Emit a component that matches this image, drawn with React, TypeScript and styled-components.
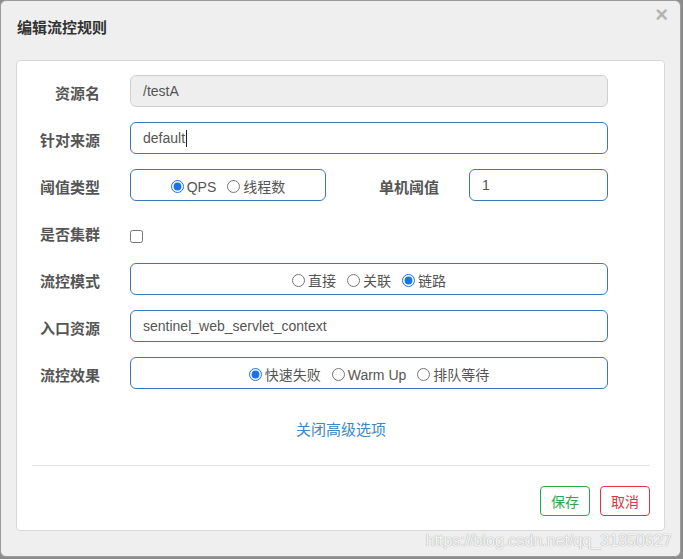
import React from "react"
import styled, { createGlobalStyle } from "styled-components"

const GlobalStyle = createGlobalStyle`
  html, body {
    margin: 0;
    padding: 0;
    background: #8c8c8c;
  }
  body {
    font-family: "Liberation Sans", "Noto Sans CJK SC", sans-serif;
    font-size: 14px;
    color: #555;
  }
`

const Dialog = styled.div`
  position: relative;
  box-sizing: border-box;
  width: 681px;
  height: 557px;
  background: #efefef;
  border: 1px solid #9a9a9a;
  border-radius: 6px;
  overflow: hidden;
`

const Header = styled.div`
  display: flex;
  justify-content: space-between;
  align-items: flex-start;
  height: 59px;
  padding: 0 12px 0 16px;
`

const Title = styled.h4`
  margin: 18px 0 0;
  font-size: 15px;
  line-height: 18px;
  font-weight: 700;
  color: #333;
`

const Close = styled.span`
  margin-top: 3px;
  font-family: "Liberation Sans", sans-serif;
  font-size: 22px;
  font-weight: 700;
  line-height: 22px;
  color: #b4b4b4;
`

const Panel = styled.div`
  box-sizing: border-box;
  margin: 0 15px;
  height: 471px;
  background: #fff;
  border: 1px solid #d8d8d8;
  border-radius: 4px;
  padding: 14px 14px 0 15px;
`

const Row = styled.div`
  display: flex;
  align-items: center;
  height: 32px;
  margin-bottom: 15px;
`

const Label = styled.label<{ width?: number }>`
  flex: none;
  width: ${(p) => p.width ?? 68}px;
  margin-right: 30px;
  padding-top: 4px;
  text-align: right;
  font-family: "Noto Sans CJK SC", sans-serif;
  font-size: 15px;
  font-weight: 700;
  color: #555;
  line-height: 20px;
`

const TextInput = styled.div<{ disabled?: boolean; width?: number }>`
  box-sizing: border-box;
  display: flex;
  align-items: center;
  width: ${(p) => p.width ?? 478}px;
  height: 32px;
  padding: 0 12px;
  border: 1px solid ${(p) => (p.disabled ? "#cfcfcf" : "#3a78b5")};
  border-radius: 6px;
  background: ${(p) => (p.disabled ? "#eee" : "#fff")};
  font-size: 14px;
  color: #555;
`

const Caret = styled.span`
  display: inline-block;
  width: 1px;
  height: 17px;
  background: #222;
  margin-left: 1px;
`

const RadioBox = styled.div<{ width?: number }>`
  box-sizing: border-box;
  display: flex;
  justify-content: center;
  align-items: center;
  gap: 11px;
  width: ${(p) => p.width ?? 478}px;
  height: 32px;
  padding-top: 3px;
  border: 1px solid #3a78b5;
  border-radius: 6px;
  background: #fff;
`

const Option = styled.label`
  display: flex;
  align-items: center;
  gap: 3px;
  font-size: 14px;
  line-height: 18px;
  color: #555;

  input {
    margin: 0;
    width: 13px;
    height: 13px;
    accent-color: #1a73e8;
  }
`

const Check = styled.input`
  margin: 8px 0 0;
  width: 13px;
  height: 13px;
`

const LinkRow = styled.div`
  display: flex;
  justify-content: center;
  margin: 30px 0 0;
  height: 20px;
`

const Link = styled.a`
  font-family: "Noto Sans CJK SC", sans-serif;
  font-size: 15px;
  line-height: 20px;
  color: #3c87c8;
  text-decoration: none;
`

const Divider = styled.hr`
  margin: 26px 0 0 0;
  border: 0;
  border-top: 1px solid #e3e3e3;
  width: 618px;
`

const Footer = styled.div`
  display: flex;
  justify-content: flex-end;
  gap: 10px;
  margin-top: 20px;
`

const Button = styled.button<{ tone: string }>`
  box-sizing: border-box;
  width: 50px;
  height: 30px;
  padding: 0;
  background: #fff;
  border: 1px solid ${(p) => p.tone};
  border-radius: 4px;
  color: ${(p) => p.tone};
  font-family: "Noto Sans CJK SC", sans-serif;
  font-size: 14px;
`

const Watermark = styled.span`
  position: absolute;
  right: 8px;
  bottom: 6px;
  font-family: "Liberation Sans", sans-serif;
  font-size: 16.5px;
  letter-spacing: -0.2px;
  color: rgba(255, 255, 255, 0.9);
  text-shadow: 0 0 1px #a9a9a9, 0 0 1px #b5b5b5;
`

export default function App() {
  return (
    <>
      <GlobalStyle />
      <Dialog>
        <Header>
          <Title>编辑流控规则</Title>
          <Close>×</Close>
        </Header>
        <Panel>
          <Row>
            <Label>资源名</Label>
            <TextInput disabled>/testA</TextInput>
          </Row>
          <Row>
            <Label>针对来源</Label>
            <TextInput>
              default<Caret />
            </TextInput>
          </Row>
          <Row>
            <Label>阈值类型</Label>
            <RadioBox width={196}>
              <Option>
                <input type="radio" name="grade" defaultChecked />
                QPS
              </Option>
              <Option>
                <input type="radio" name="grade" />
                线程数
              </Option>
            </RadioBox>
            <Label width={113}>单机阈值</Label>
            <TextInput width={139}>1</TextInput>
          </Row>
          <Row>
            <Label>是否集群</Label>
            <Check type="checkbox" />
          </Row>
          <Row>
            <Label>流控模式</Label>
            <RadioBox>
              <Option>
                <input type="radio" name="strategy" />
                直接
              </Option>
              <Option>
                <input type="radio" name="strategy" />
                关联
              </Option>
              <Option>
                <input type="radio" name="strategy" defaultChecked />
                链路
              </Option>
            </RadioBox>
          </Row>
          <Row>
            <Label>入口资源</Label>
            <TextInput>sentinel_web_servlet_context</TextInput>
          </Row>
          <Row>
            <Label>流控效果</Label>
            <RadioBox>
              <Option>
                <input type="radio" name="behavior" defaultChecked />
                快速失败
              </Option>
              <Option>
                <input type="radio" name="behavior" />
                Warm Up
              </Option>
              <Option>
                <input type="radio" name="behavior" />
                排队等待
              </Option>
            </RadioBox>
          </Row>
          <LinkRow>
            <Link href="#">关闭高级选项</Link>
          </LinkRow>
          <Divider />
          <Footer>
            <Button tone="#2aa847">保存</Button>
            <Button tone="#dc3545">取消</Button>
          </Footer>
        </Panel>
        <Watermark>https://blog.csdn.net/qq_31850627</Watermark>
      </Dialog>
    </>
  )
}
